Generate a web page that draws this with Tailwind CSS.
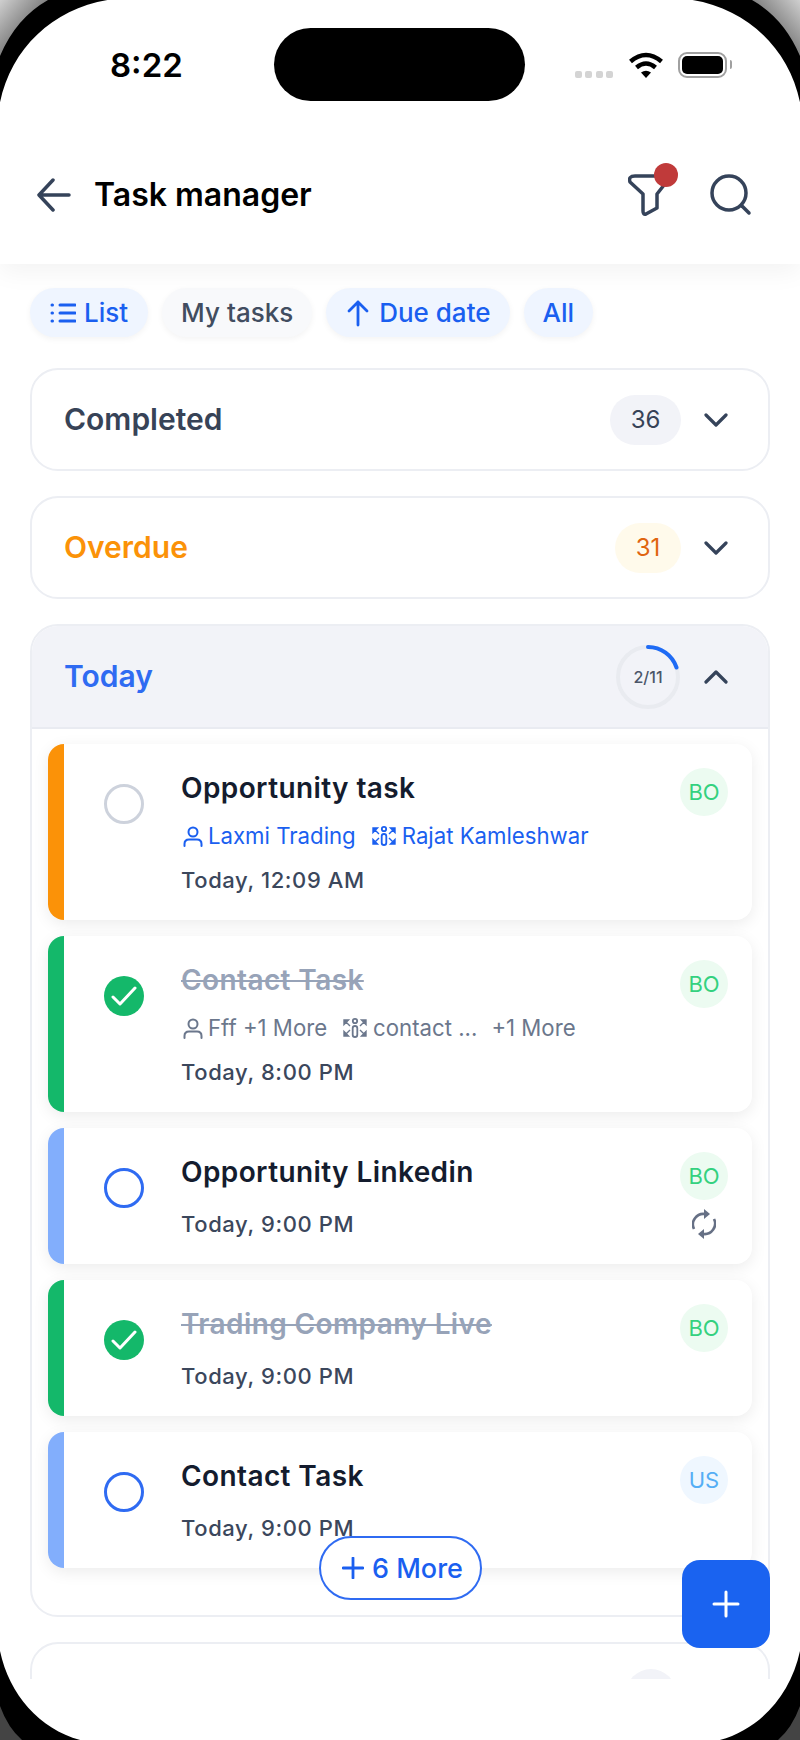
<!DOCTYPE html>
<html lang="en">
<head>
  <meta charset="UTF-8">
  <meta name="viewport" content="width=device-width, initial-scale=1.0">
  <title>Task manager</title>
  <script src="https://cdn.jsdelivr.net/npm/@tailwindcss/browser@4"></script>
</head>
<body class="bg-white font-[Inter,sans-serif]">
  <div class="relative w-[800px] h-[1740px] overflow-hidden bg-white">
    <!-- scrolling area stops above the home indicator space -->
    <div class="h-[1679px] overflow-hidden">
      <header class="relative z-10 h-[264px] bg-white shadow-[0_8px_24px_rgba(0,0,0,0.05)]">
        <div class="flex items-start h-[156px]">
          <span class="ml-[110px] mt-[45px] text-[33px] leading-[40px] font-semibold text-black">8:22</span>
          <div class="ml-[91px] mt-[28px] w-[251px] h-[73px] rounded-[37px] bg-black"></div>
          <div class="ml-[50px] mt-[71px] flex gap-[3.5px]">
            <span class="w-[7px] h-[7px] rounded-[2px] bg-[#d4d4d4]"></span>
            <span class="w-[7px] h-[7px] rounded-[2px] bg-[#d4d4d4]"></span>
            <span class="w-[7px] h-[7px] rounded-[2px] bg-[#d4d4d4]"></span>
            <span class="w-[7px] h-[7px] rounded-[2px] bg-[#d4d4d4]"></span>
          </div>
          <svg class="ml-[15px] mt-[52px]" width="36" height="26" viewBox="0 0 36 26" fill="none">
            <path d="M2.5 9.5Q18 -3.5 33.5 9.5" stroke="black" stroke-width="4.5"/>
            <path d="M8.5 15.5Q18 7.5 27.5 15.5" stroke="black" stroke-width="4.5"/>
            <path d="M13 20.5Q18 17 23 20.5L18 26Z" fill="black"/>
          </svg>
          <div class="ml-[14px] mt-[52px] w-[49px] h-[26px] rounded-[9px] border-2 border-[#a0a0a0] p-[2px]">
            <div class="w-full h-full rounded-[5px] bg-black"></div>
          </div>
          <div class="ml-[3px] mt-[60px] w-[2px] h-[9px] rounded-r bg-[#a0a0a0]"></div>
        </div>
        <div class="flex items-center h-[78px] pl-[37px] pr-[48px]">
          <svg width="34" height="36" viewBox="0 0 34 36" fill="none" stroke="#35435a" stroke-width="3.5" stroke-linecap="round" stroke-linejoin="round">
            <path d="M32 18H3M16 3L2 18L16 33"/>
          </svg>
          <h1 class="ml-[23px] text-[32px] font-semibold leading-none text-black">Task manager</h1>
          <div class="relative ml-auto w-[44px] h-[44px]">
            <svg class="absolute left-0 top-0" width="44" height="44" viewBox="0 0 44 44" fill="none" stroke="#35435a" stroke-width="3.5" stroke-linejoin="round">
              <path d="M7 3H38Q42 3 40 7L29 21V35L18 41Q15 42 15 38V21L2 9Q0 3 7 3Z"/>
            </svg>
            <span class="absolute left-[26px] top-[-10px] w-[24px] h-[24px] rounded-full bg-[#c03a3a]"></span>
          </div>
          <svg class="ml-[38px]" width="42" height="42" viewBox="0 0 42 42" fill="none" stroke="#35435a" stroke-width="3.5" stroke-linecap="round">
            <circle cx="19" cy="19" r="17"/>
            <path d="M32 32L39 39"/>
          </svg>
        </div>
      </header>

      <div class="flex gap-[14px] mt-6 pl-[30px] text-[26px] font-[450]">
        <div class="flex items-center gap-[8px] h-[49px] px-[20px] rounded-[25px] bg-[#eff5ff] shadow-[0_2px_6px_rgba(0,0,0,0.05)] text-[#1a5ff0]">
          <svg width="26" height="24" viewBox="0 0 26 24" fill="none" stroke="#1a5ff0" stroke-width="3" stroke-linecap="round">
            <path d="M10 4H25M10 12H25M10 20H25M2 4H2.5M2 12H2.5M2 20H2.5"/>
          </svg>
          <span>List</span>
        </div>
        <div class="flex items-center h-[49px] px-[19px] rounded-[25px] bg-[#f8f9fb] shadow-[0_2px_6px_rgba(0,0,0,0.05)] text-[#414d60]">My tasks</div>
        <div class="flex items-center gap-[10px] h-[49px] pl-[21px] pr-[19px] rounded-[25px] bg-[#eff5ff] shadow-[0_2px_6px_rgba(0,0,0,0.05)] text-[#1a5ff0]">
          <svg width="22" height="28" viewBox="0 0 22 28" fill="none" stroke="#1a5ff0" stroke-width="2.8" stroke-linecap="round" stroke-linejoin="round">
            <path d="M11 26V3M2 12L11 3L20 12"/>
          </svg>
          <span>Due date</span>
        </div>
        <div class="flex items-center h-[49px] px-[19px] rounded-[25px] bg-[#eff5ff] shadow-[0_2px_6px_rgba(0,0,0,0.05)] text-[#1a5ff0]">All</div>
      </div>

      <div class="flex flex-col gap-[25px] mt-[31px] mx-[30px]">
        <!-- Completed -->
        <section class="flex items-center h-[103px] pl-[32px] pr-[40px] rounded-[28px] border-2 border-[#eceef3]">
          <span class="text-[30px] font-semibold text-[#374357]">Completed</span>
          <span class="ml-auto flex items-center justify-center w-[71px] h-[50px] rounded-[25px] bg-[#f2f3f8] text-[24px] text-[#374357]">36</span>
          <svg class="ml-[23px]" width="24" height="14" viewBox="0 0 24 14" fill="none" stroke="#35435a" stroke-width="3.2" stroke-linecap="round" stroke-linejoin="round"><path d="M2 2L12 12L22 2"/></svg>
        </section>

        <!-- Overdue -->
        <section class="flex items-center h-[103px] pl-[32px] pr-[40px] rounded-[28px] border-2 border-[#eceef3]">
          <span class="text-[30px] font-semibold text-[#fb9208]">Overdue</span>
          <span class="ml-auto flex items-center justify-center w-[66px] h-[50px] rounded-[25px] bg-[#fffaeb] text-[24px] text-[#e0650f]">31</span>
          <svg class="ml-[23px]" width="24" height="14" viewBox="0 0 24 14" fill="none" stroke="#35435a" stroke-width="3.2" stroke-linecap="round" stroke-linejoin="round"><path d="M2 2L12 12L22 2"/></svg>
        </section>

        <!-- Today -->
        <section class="relative rounded-[28px] border-2 border-[#eceef3] pb-[47px]">
          <div class="flex items-center h-[103px] pl-[32px] pr-[40px] rounded-t-[26px] bg-[#f2f3f8] border-b-2 border-[#e9ebf1]">
            <span class="text-[30px] font-semibold text-[#2f6bf2]">Today</span>
            <div class="relative ml-auto flex items-center justify-center w-[64px] h-[64px]">
              <svg class="absolute left-0 top-0" width="64" height="64" viewBox="0 0 64 64" fill="none" stroke-width="4" stroke-linecap="round">
                <circle cx="32" cy="32" r="30" stroke="#e9ebf0"/>
                <path d="M32 2A30 30 0 0 1 60.5 22.5" stroke="#1f6bf5"/>
              </svg>
              <span class="text-[16px] font-medium text-[#4b5669]">2/11</span>
            </div>
            <svg class="ml-[24px]" width="24" height="14" viewBox="0 0 24 14" fill="none" stroke="#35435a" stroke-width="3.2" stroke-linecap="round" stroke-linejoin="round"><path d="M2 12L12 2L22 12"/></svg>
          </div>

          <div class="flex flex-col gap-4 pt-[15px] px-4">
            <!-- task 1 -->
            <article class="flex h-[176px] rounded-2xl bg-white shadow-[0_4px_16px_rgba(0,0,0,0.08)]">
              <div class="w-4 rounded-l-2xl bg-[#fb9208]"></div>
              <div class="mt-10 ml-10 w-10 h-10 rounded-full border-[3px] border-[#cdd2dc]"></div>
              <div class="ml-[37px] pt-6">
                <h2 class="text-[28px] leading-10 font-semibold tracking-[0.4px] text-[#141c2e]">Opportunity task</h2>
                <div class="flex items-center h-8 mt-3 text-[22.2px] text-[#1a5ff0]">
                  <svg width="24" height="24" viewBox="0 0 24 24" fill="none" stroke="#1a5ff0" stroke-width="2" stroke-linecap="round"><circle cx="12" cy="8" r="4.5"/><path d="M3.5 22V20Q3.5 15.5 8 15.5H16Q20.5 15.5 20.5 20V22"/></svg>
                  <span class="ml-[3px]">Laxmi Trading</span>
                  <svg class="ml-[16px]" width="24" height="24" viewBox="0 0 24 24" fill="#1a5ff0" stroke="#1a5ff0" stroke-width="1.8"><circle cx="12" cy="5" r="2.2" fill="none"/><rect x="9.7" y="10" width="4.6" height="11" rx="2.3" fill="none"/><path d="M1 4H5.5L1 8.5ZM3 6L7 10M23 4H18.5L23 8.5ZM21 6L17 10M1 20H5.5L1 15.5ZM3 18L7 14M23 20H18.5L23 15.5ZM21 18L17 14" stroke-width="1.4"/></svg>
                  <span class="ml-[6px]">Rajat Kamleshwar</span>
                </div>
                <p class="h-8 mt-3 text-[22px] leading-8 font-medium tracking-[0.6px] text-[#3b475c]">Today, 12:09 AM</p>
              </div>
              <div class="ml-auto mt-6 mr-6 flex items-center justify-center w-12 h-12 rounded-full bg-[#ecfbf1] text-[22px] text-[#34d17f]">BO</div>
            </article>

            <!-- task 2 -->
            <article class="flex h-[176px] rounded-2xl bg-white shadow-[0_4px_16px_rgba(0,0,0,0.08)]">
              <div class="w-4 rounded-l-2xl bg-[#14b86a]"></div>
              <div class="flex items-center justify-center mt-10 ml-10 w-10 h-10 rounded-full bg-[#14b86a]">
                <svg width="26" height="20" viewBox="0 0 26 20" fill="none" stroke="white" stroke-width="3" stroke-linecap="round" stroke-linejoin="round"><path d="M2 11L9 18L24 2"/></svg>
              </div>
              <div class="ml-[37px] pt-6">
                <h2 class="text-[28px] leading-10 font-semibold tracking-[0.4px] text-[#97a3b8] line-through">Contact Task</h2>
                <div class="flex items-center h-8 mt-3 text-[22.2px] text-[#6b778c]">
                  <svg width="24" height="24" viewBox="0 0 24 24" fill="none" stroke="#6b778c" stroke-width="2" stroke-linecap="round"><circle cx="12" cy="8" r="4.5"/><path d="M3.5 22V20Q3.5 15.5 8 15.5H16Q20.5 15.5 20.5 20V22"/></svg>
                  <span class="ml-[3px]">Fff +1 More</span>
                  <svg class="ml-[16px]" width="24" height="24" viewBox="0 0 24 24" fill="#6b778c" stroke="#6b778c" stroke-width="1.8"><circle cx="12" cy="5" r="2.2" fill="none"/><rect x="9.7" y="10" width="4.6" height="11" rx="2.3" fill="none"/><path d="M1 4H5.5L1 8.5ZM3 6L7 10M23 4H18.5L23 8.5ZM21 6L17 10M1 20H5.5L1 15.5ZM3 18L7 14M23 20H18.5L23 15.5ZM21 18L17 14" stroke-width="1.4"/></svg>
                  <span class="ml-[6px]">contact ...</span>
                  <span class="ml-[14px]">+1 More</span>
                </div>
                <p class="h-8 mt-3 text-[22px] leading-8 font-medium tracking-[0.6px] text-[#3b475c]">Today, 8:00 PM</p>
              </div>
              <div class="ml-auto mt-6 mr-6 flex items-center justify-center w-12 h-12 rounded-full bg-[#ecfbf1] text-[22px] text-[#34d17f]">BO</div>
            </article>

            <!-- task 3 -->
            <article class="flex h-[136px] rounded-2xl bg-white shadow-[0_4px_16px_rgba(0,0,0,0.08)]">
              <div class="w-4 rounded-l-2xl bg-[#82aefc]"></div>
              <div class="mt-10 ml-10 w-10 h-10 rounded-full border-[3px] border-[#2f6bf2]"></div>
              <div class="ml-[37px] pt-6">
                <h2 class="text-[28px] leading-10 font-semibold tracking-[0.4px] text-[#141c2e]">Opportunity Linkedin</h2>
                <p class="h-8 mt-4 text-[22px] leading-8 font-medium tracking-[0.6px] text-[#3b475c]">Today, 9:00 PM</p>
              </div>
              <div class="ml-auto mt-6 mr-6 flex flex-col items-center">
                <div class="flex items-center justify-center w-12 h-12 rounded-full bg-[#ecfbf1] text-[22px] text-[#34d17f]">BO</div>
                <svg class="mt-[9px]" width="24" height="30" viewBox="2 0 24 30" fill="none" stroke="#667085" stroke-width="2.6">
                  <path d="M4 20A10.5 10.5 0 0 1 15 5"/>
                  <path d="M24 10A10.5 10.5 0 0 1 13 25"/>
                  <path d="M14 0L20 5L14 10Z" fill="#667085" stroke="none"/>
                  <path d="M14 20L8 25L14 30Z" fill="#667085" stroke="none"/>
                </svg>
              </div>
            </article>

            <!-- task 4 -->
            <article class="flex h-[136px] rounded-2xl bg-white shadow-[0_4px_16px_rgba(0,0,0,0.08)]">
              <div class="w-4 rounded-l-2xl bg-[#14b86a]"></div>
              <div class="flex items-center justify-center mt-10 ml-10 w-10 h-10 rounded-full bg-[#14b86a]">
                <svg width="26" height="20" viewBox="0 0 26 20" fill="none" stroke="white" stroke-width="3" stroke-linecap="round" stroke-linejoin="round"><path d="M2 11L9 18L24 2"/></svg>
              </div>
              <div class="ml-[37px] pt-6">
                <h2 class="text-[28px] leading-10 font-semibold tracking-[0.4px] text-[#97a3b8] line-through">Trading Company Live</h2>
                <p class="h-8 mt-4 text-[22px] leading-8 font-medium tracking-[0.6px] text-[#3b475c]">Today, 9:00 PM</p>
              </div>
              <div class="ml-auto mt-6 mr-6 flex items-center justify-center w-12 h-12 rounded-full bg-[#ecfbf1] text-[22px] text-[#34d17f]">BO</div>
            </article>

            <!-- task 5 -->
            <article class="flex h-[136px] rounded-2xl bg-white shadow-[0_4px_16px_rgba(0,0,0,0.08)]">
              <div class="w-4 rounded-l-2xl bg-[#82aefc]"></div>
              <div class="mt-10 ml-10 w-10 h-10 rounded-full border-[3px] border-[#2f6bf2]"></div>
              <div class="ml-[37px] pt-6">
                <h2 class="text-[28px] leading-10 font-semibold tracking-[0.4px] text-[#141c2e]">Contact Task</h2>
                <p class="h-8 mt-4 text-[22px] leading-8 font-medium tracking-[0.6px] text-[#3b475c]">Today, 9:00 PM</p>
              </div>
              <div class="ml-auto mt-6 mr-6 flex items-center justify-center w-12 h-12 rounded-full bg-[#eff7ff] text-[22px] text-[#55aef5]">US</div>
            </article>
          </div>

          <button class="absolute left-[287px] bottom-[15px] flex items-center gap-2 h-[64px] pl-[21px] pr-[17px] rounded-[32px] border-2 border-[#2f6bf2] bg-white text-[27px] font-medium text-[#1a5ff0]">
            <svg width="22" height="22" viewBox="0 0 22 22" fill="none" stroke="#1a5ff0" stroke-width="2.8" stroke-linecap="round"><path d="M11 1V21M1 11H21"/></svg>
            <span class="pt-[2px]">6 More</span>
          </button>
        </section>

        <!-- next group, cut off by the fold -->
        <section class="flex items-start h-[103px] pt-[25px] pr-[92px] rounded-[28px] border-2 border-[#eceef3]">
          <span class="ml-auto w-[50px] h-[50px] rounded-full bg-[#f2f3f8]"></span>
        </section>
      </div>
    </div>

    <button class="absolute z-20 left-[682px] top-[1560px] flex items-center justify-center w-[88px] h-[88px] rounded-[18px] bg-[#1a63f0]">
      <svg width="28" height="28" viewBox="0 0 28 28" fill="none" stroke="white" stroke-width="3" stroke-linecap="round"><path d="M14 2V26M2 14H26"/></svg>
    </button>

    <!-- device bezel on top of the screen -->
    <svg class="absolute z-30 left-0 top-0 pointer-events-none" width="800" height="1740" viewBox="0 0 800 1740">
      <defs>
        <linearGradient id="bezelLeft" x1="0" y1="0" x2="1" y2="1">
          <stop offset="0" stop-color="#cfcfcf"/>
          <stop offset="0.55" stop-color="#7a7a7a"/>
          <stop offset="1" stop-color="#2a2a2a"/>
        </linearGradient>
        <linearGradient id="bezelRight" x1="1" y1="0" x2="0" y2="1">
          <stop offset="0" stop-color="#cfcfcf"/>
          <stop offset="0.55" stop-color="#7a7a7a"/>
          <stop offset="1" stop-color="#2a2a2a"/>
        </linearGradient>
      </defs>
      <path fill-rule="evenodd" fill="#000" d="M0 0H800V1740H0ZM132 -2C55 -2 -3 55 -3 132V1622C-3 1690 45 1744 110 1744H690C755 1744 803 1690 803 1622V132C803 55 745 -2 668 -2Z"/>
      <path d="M0 0H48Q16 18 0 56Z" fill="url(#bezelLeft)"/>
      <path d="M800 0H752Q784 18 800 56Z" fill="url(#bezelRight)"/>
      <path d="M0 1740H22Q8 1728 0 1706Z" fill="#444"/>
      <path d="M800 1740H778Q792 1728 800 1706Z" fill="#444"/>
    </svg>
  </div>
</body>
</html>
